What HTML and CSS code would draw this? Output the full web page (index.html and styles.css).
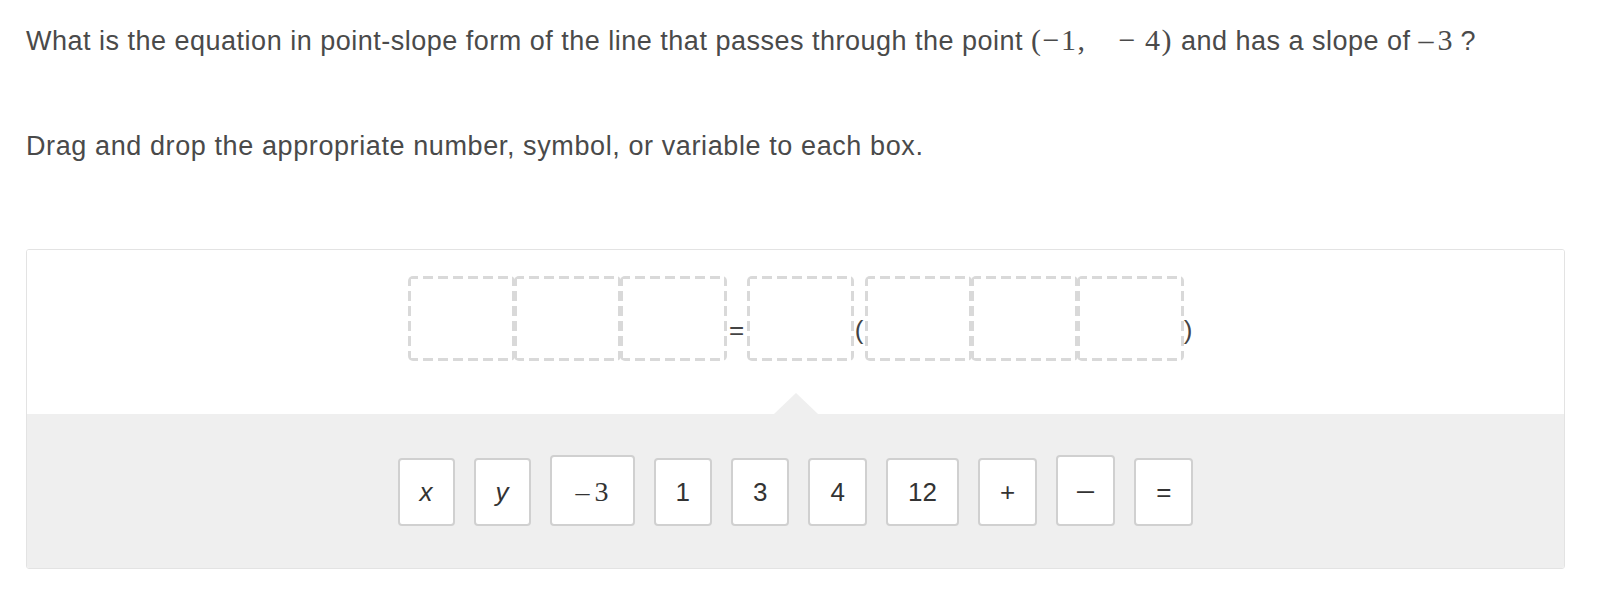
FILE: index.html
```html
<!DOCTYPE html>
<html lang="en">
<head>
<meta charset="utf-8">
<title>Point-slope form</title>
<link rel="stylesheet" href="styles.css">
</head>
<body>
<div class="page">
  <p class="question">What is the equation in point-slope form of the line that passes through the point <span class="math point">(−1,<span class="sp-wide"></span>−<span class="sp-thin"></span>4)</span> and has a slope of <span class="math slope">–<span class="sp-thin"></span>3</span> ?</p>
  <p class="instructions">Drag and drop the appropriate number, symbol, or variable to each box.</p>

  <div class="widget">
    <div class="drop-area">
      <div class="drop-row">
        <div class="slot"></div>
        <div class="slot joined"></div>
        <div class="slot joined"></div>
        <span class="sym sym-eq">=</span>
        <div class="slot"></div>
        <span class="sym sym-open">(</span>
        <div class="slot"></div>
        <div class="slot joined"></div>
        <div class="slot joined"></div>
        <span class="sym sym-close">)</span>
      </div>
    </div>
    <div class="tray">
      <div class="tile var">x</div>
      <div class="tile var">y</div>
      <div class="tile tall mathtile">–<span class="sp-thin"></span>3</div>
      <div class="tile">1</div>
      <div class="tile">3</div>
      <div class="tile">4</div>
      <div class="tile">12</div>
      <div class="tile">+</div>
      <div class="tile tall"><span class="wide-minus">−</span></div>
      <div class="tile">=</div>
    </div>
  </div>
</div>
</body>
</html>
```

FILE: styles.css
```css
html, body {
  margin: 0;
  padding: 0;
  background: #ffffff;
}

body {
  font-family: "Liberation Sans", Arial, Helvetica, sans-serif;
  color: #4a4a4a;
}

.page {
  padding: 25px 35px 0 26px;
}

.question,
.instructions {
  margin: 0;
  font-size: 27px;
  letter-spacing: 0.6px;
  line-height: 30px;
  white-space: nowrap;
}

.question {
  letter-spacing: 0.5px;
}

.instructions {
  margin-top: 75px;
}

.math {
  font-family: "Liberation Serif", "Times New Roman", serif;
  font-size: 30px;
  letter-spacing: 0;
}

.math.point {
  letter-spacing: 1.5px;
}

.sp-wide {
  display: inline-block;
  width: 32px;
}

.sp-thin {
  display: inline-block;
  width: 8px;
}

.math.slope .sp-thin {
  width: 4px;
}

.widget {
  margin-top: 88px;
  width: 1539px;
  box-sizing: border-box;
  border: 1px solid #e3e3e3;
  border-radius: 3px;
  overflow: hidden;
}

.drop-area {
  position: relative;
  height: 164px;
  box-sizing: border-box;
  padding: 26px 0 0 9px;
  background: #ffffff;
  display: flex;
  justify-content: center;
  align-items: flex-start;
}

.drop-area::after {
  content: "";
  position: absolute;
  bottom: 0;
  left: 50%;
  margin-left: -22px;
  border-left: 22px solid transparent;
  border-right: 22px solid transparent;
  border-bottom: 21px solid #efefef;
}

.drop-row {
  display: flex;
  align-items: flex-start;
}

.slot {
  width: 107px;
  height: 85px;
  box-sizing: border-box;
  border-radius: 5px;
  background:
    repeating-linear-gradient(90deg, #d9d9d9 0 10px, transparent 10px 15px) left top / 100% 3px no-repeat,
    repeating-linear-gradient(90deg, #d9d9d9 0 10px, transparent 10px 15px) left bottom / 100% 3px no-repeat,
    repeating-linear-gradient(180deg, #d9d9d9 0 10px, transparent 10px 15px) left top / 3px 100% no-repeat,
    repeating-linear-gradient(180deg, #d9d9d9 0 10px, transparent 10px 15px) right top / 3px 100% no-repeat;
}

.slot.joined {
  margin-left: -1px;
}

.sym {
  margin-top: 39px;
  font-size: 26px;
  line-height: 30px;
  color: #444444;
  text-align: center;
}

.sym-eq {
  width: 20px;
}

.sym-open {
  width: 11px;
}

.sym-close {
  width: 9px;
}

.tray {
  height: 154px;
  box-sizing: border-box;
  padding-top: 41px;
  background: #efefef;
  display: flex;
  justify-content: center;
  align-items: flex-start;
  gap: 19px;
}

.tile {
  height: 68px;
  margin-top: 3px;
  box-sizing: border-box;
  padding: 0 20px;
  min-width: 56px;
  border: 2px solid #d0d0d0;
  border-radius: 4px;
  background: #ffffff;
  display: flex;
  align-items: center;
  justify-content: center;
  font-size: 26px;
  color: #333333;
}

.tile.tall {
  height: 71px;
  margin-top: 0;
  padding-top: 4px;
}

.tile.var {
  font-style: italic;
}

.tile.mathtile {
  font-family: "Liberation Serif", "Times New Roman", serif;
  font-size: 28px;
  padding: 3px 24px 0;
}

.tile.mathtile .sp-thin {
  width: 5px;
}

.wide-minus {
  display: inline-block;
  transform: scaleX(1.35);
}
```
